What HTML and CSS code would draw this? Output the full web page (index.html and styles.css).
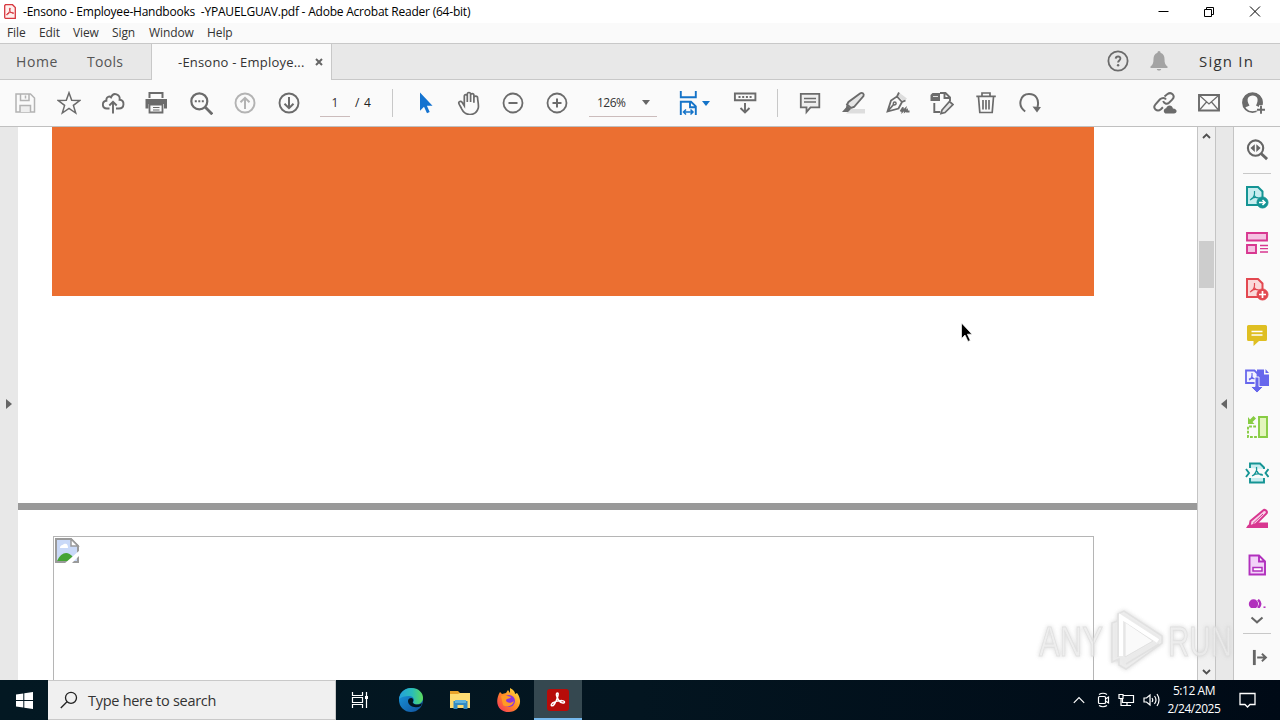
FILE: index.html
```
<!DOCTYPE html>
<html lang="en">
<head>
  <meta charset="UTF-8" />
  <meta name="viewport" content="width=device-width, initial-scale=1" />
  <title>-Ensono - Employee-Handbooks  -YPAUELGUAV.pdf - Adobe Acrobat Reader (64-bit)</title>
  <link rel="stylesheet" href="styles.css">
</head>
<body>
  <header class="titlebar">
    <svg class="app-icon" width="12" height="15" viewBox="0 0 12 15"><path d="M1.5.7h7l2.8 2.8v10.8H1.5a1 1 0 0 1-.8-.8v-12z" fill="#fff0ee" stroke="#d7373f" stroke-width="1.3"/><path d="M6 4c-1 0-.6 2 .3 3.4C7.500 9.300 9.500 10 9.700 9.100 9.800 8 5 8.200 3 9.900c-1 1 0 1.700 1 .3C5 8.600 7 4 6 4z" fill="none" stroke="#d7373f"/></svg>
    <h1>-Ensono - Employee-Handbooks&nbsp; -YPAUELGUAV.pdf - Adobe Acrobat Reader (64-bit)</h1>
    <div class="window-buttons">
      <svg width="12" height="12" viewBox="0 0 12 12"><path d="M1.500 5.500h10"/></svg>
      <svg width="12" height="12" viewBox="0 0 12 12"><path d="M1.500 3.500h7v7h-7zM3.500 3.500v-2h7v7h-2"/></svg>
      <svg width="12" height="12" viewBox="0 0 12 12"><path d="M1 .5l10 10M11 .5l-10 10"/></svg>
    </div>
  </header>

  <nav class="menubar">
    <span class="m-file">File</span>
    <span class="m-edit">Edit</span>
    <span class="m-view">View</span>
    <span class="m-sign">Sign</span>
    <span class="m-window">Window</span>
    <span class="m-help">Help</span>
  </nav>

  <div class="tabs">
    <span class="tab home">Home</span>
    <span class="tab tools">Tools</span>
    <div class="tab active">
      <span>-Ensono - Employe...</span>
      <svg width="8" height="8" viewBox="0 0 8 8"><path d="M1 1l6 6M7 1L1 7" stroke="#666" stroke-width="2"/></svg>
    </div>
    <div class="account">
      <svg width="24" height="24" viewBox="0 0 24 24"><circle cx="12" cy="12" r="9.600" fill="none" stroke="#6b6b6b" stroke-width="1.800"/><path d="M9.700 9.600c.2-2.800 4.800-2.700 4.700 0 0 1.900-2.300 1.900-2.300 4" fill="none" stroke="#6b6b6b" stroke-width="1.900"/><circle cx="12.100" cy="16.300" r="1.200" fill="#6b6b6b"/></svg>
      <svg class="bell" width="18" height="22" viewBox="0 0 18 22"><path d="M9 1c1 0 1.500.8 1.500 1.700 3 .9 4 3.500 4 6.300 0 4 .8 6 3 7.500V18H.5v-1.500C2.700 15 3.500 13 3.500 9c0-2.800 1-5.400 4-6.300C7.500 1.800 8 1 9 1zM6.800 19h4.400c-.3 2-4.100 2-4.400 0z" fill="#a3a3a3"/></svg>
      <span class="sign-in">Sign In</span>
    </div>
  </div>

  <div class="toolbar">
    <div class="group files">
      <svg class="icon off" viewBox="0 0 24 24"><path d="M3 3h14.500L21.500 7v14H3zM7.500 3v6.500h8.500V3M12.500 4.500v3"/><path d="M7 21v-6.500h10.500V21" fill="#eee"/></svg>
      <svg class="icon" viewBox="0 0 24 24"><path d="M12 1.800l2.700 7.500 8 .2-6.300 4.900 2.300 7.600L12 17.500 5.300 22l2.300-7.600L1.300 9.500l8-.2z" stroke-width="1.500"/></svg>
      <svg class="icon" viewBox="0 0 24 24"><path d="M8.500 17.500H5.800c-5-.2-5.300-7-.4-7.700C4.800 6 8.500 4.700 10 6.300c2.500-5.800 9.500-2.800 8.600 2.500 5.500.6 5 8.700-.6 8.700h-3M12 22.500V10.800M8.300 14.500L12 10.800l3.700 3.700" stroke-width="1.900"/></svg>
      <svg class="icon" viewBox="0 0 24 24"><path d="M4.500 7V2h13v5" stroke-width="2"/><path class="solid" d="M.5 8h21.500v9.500H19V13H3.500v4.500h-3z"/><path d="M4.500 13.500h13v8h-13z" fill="#fafafa" stroke-width="1.800"/><path d="M8 16.500h6.500M8 19h6.500" stroke-width="1.200"/></svg>
      <svg class="icon" viewBox="0 0 24 24"><circle cx="10.300" cy="10.300" r="8" stroke-width="2.200"/><path d="M16.300 16.300l7 7" stroke-width="2.800"/><path class="solid" d="M5.800 9.300h2v2h-2zM9.300 9.300h2v2h-2zM12.800 9.300h2v2h-2z"/></svg>
      <svg class="icon off" viewBox="0 0 24 24"><circle cx="12" cy="12" r="9.500" stroke-width="1.900"/><path d="M12 18V7M7.500 11.300L12 6.800l4.500 4.500" stroke-width="2"/></svg>
      <svg class="icon" viewBox="0 0 24 24"><circle cx="12" cy="12" r="9.500" stroke-width="1.900"/><path d="M12 6v11M7.500 12.700L12 17.200l4.500-4.500" stroke-width="2"/></svg>
    </div>
    <span class="page-number">1</span>
    <span class="page-total">/&nbsp;4</span>
    <i class="divider"></i>
    <div class="group view">
      <svg class="icon" viewBox="0 0 24 24"><path d="M7 1.500v18.300l4-4 3 6.500 2.700-1.300-2.800-6.300H19.500z" fill="#1473d0" stroke="none"/></svg>
      <svg class="icon" viewBox="0 0 24 24"><path d="M7.300 14.800V5.300c0-2.300 3-2.300 3 0V11 3.200c0-2.300 3.300-2.300 3.300 0V11 4.300c0-2.200 3.300-2.200 3.300 0v7.500-5c0-2.200 3.700-2.200 3.700 0 0 3 1.500 7.600.6 10.500-1.500 5-4 6.200-8.200 6.200-4.500 0-6.500-2-8.200-5.400-.9-2-2.400-4.100-2.900-5.700-.7-2 2-2.800 3.200-1.100z" stroke-width="1.700"/></svg>
      <svg class="icon" viewBox="0 0 24 24"><circle cx="12" cy="12" r="9.500" stroke-width="1.800"/><path d="M7.500 12h9" stroke-width="2"/></svg>
      <svg class="icon" viewBox="0 0 24 24"><circle cx="12" cy="12" r="9.500" stroke-width="1.800"/><path d="M7.500 12h9M12 7.500v9" stroke-width="2"/></svg>
    </div>
    <div class="zoom-box"><span>126%</span><i class="caret"></i></div>
    <div class="fit">
      <svg class="icon blue" viewBox="0 0 24 24"><path d="M4.800 0v6.300h15V0M4.800 24V10.800H15l4.800 4.500V24M14 10.800v5.500h5.500" stroke-width="1.900"/><path d="M7.500 21h9.500M10 18.500L7.500 21l2.500 2.500M14.500 18.500L17 21l-2.500 2.500" stroke-width="1.500"/></svg>
      <i class="caret blue"></i>
    </div>
    <svg class="icon keys" viewBox="0 0 24 24"><path d="M1.900 2.500h20.500v6.800H1.900zM12 12v9.500M7.500 17l4.500 4.500 4.500-4.500" stroke-width="1.900"/><path d="M5.500 6h14" stroke-width="2" stroke-dasharray="2 1.700"/></svg>
    <i class="divider"></i>
    <div class="group edit">
      <svg class="icon" viewBox="0 0 24 24"><path d="M2.800 2.800h18.500v13.500H12.500L8.500 21v-4.700H2.800z" fill="#eee" stroke-width="1.800"/><path d="M6 7.500h12M6 11h12" stroke-width="1.500"/></svg>
      <svg class="icon" viewBox="0 0 24 24"><path d="M9 18h14v4.500H4z" fill="#ddd" stroke="none"/><path d="M18 2.500c2-1.500 4.500 0 3.500 2.500L12 16l-3 1-4-3.500L6.500 11z" fill="#e5e5e5" stroke-width="1.900"/><path class="solid" d="M4.500 14l4.500 4-3 3H0l4-4.500z"/></svg>
      <svg class="icon" viewBox="0 0 24 24"><path d="M13 1.500l8 6-3 3-7-6z" fill="#ddd" stroke="none"/><path d="M13 1.500L11 5.500 5 9.500 1.500 20.500l11-3L16 11l3.500-1.500M11 5.500l5 5.500M1.500 20.500L8 13M14.500 20.500l2.500-4-.5 4 3-3-.5 3 2-1.500v1.500h2.500" stroke-width="1.800"/><circle cx="8.700" cy="12.500" r="1.400"/></svg>
      <svg class="icon" viewBox="0 0 24 24"><path d="M10 2h5.500l4.500 4.500V10M14.500 2v5H20M4.300 12v9h6" stroke-width="1.900"/><path class="solid" d="M2.500 2H10v8H.5V4z"/><path d="M3 5.500h5" stroke="#ddd" stroke-width="1"/><path d="M12 19l7.500-8.500 3.500 3-8 8-4 1z" fill="#e5e5e5" stroke-width="1.700"/></svg>
      <svg class="icon" viewBox="0 0 24 24"><path d="M2.300 5.300h19.500M8 5V2h8v3M4.500 6l1.300 15.500h12.400L19.500 6M9 9v9.500M12 9v9.500M15 9v9.500" stroke-width="1.700"/></svg>
      <svg class="icon" viewBox="0 0 24 24"><path d="M7.200 20.500C-1.300 14.500 2.500 3 11 3c7 0 10.500 5.500 8.500 13" stroke-width="2"/><path class="solid" d="M14.500 15.500l8.500.5-4 5.500z"/></svg>
    </div>
    <div class="group share">
      <svg class="icon" viewBox="0 0 24 24"><path d="M11.500 5.500l2.700-2.200c4.500-3.300 8.500 2 5 5.300L16 11.800c-2.400 2-5 .6-5.800-1.800M13 8.500c-1.300-2.200-4-2-6-.2l-4.500 5c-3.300 3.700 1.500 8.300 5.400 5l2-2" stroke-width="2"/><path class="solid" d="M13.500 22.500c-3.500 0-3.600-4.900-.3-5.200 1-4 6.300-3.400 6.700.1 5 .1 4.500 5.100 1 5.100z"/></svg>
      <svg class="icon" viewBox="0 0 24 24"><path d="M2 4h20v15.500H2z" stroke-width="1.900"/><path d="M2.500 4.500L12 13l9.500-8.500M2.500 19l7-8M21.500 19l-7-8" stroke-width="1.200"/></svg>
      <svg class="icon" viewBox="0 0 24 24"><circle cx="11.500" cy="11.700" r="9.500" stroke-width="1.800"/><path class="solid" d="M11.700 2C2 2 0 12 3.500 17c1.200-1.200 3-1.500 5-2.500C4.500 8 7.500 4.500 11.700 4.500S18.500 8 15 14.500l3 1.500 3.400-2C22.500 6 17 2 11.700 2z"/><path d="M20 14.200v9M15.500 18.700h9" stroke="#fafafa" stroke-width="4"/><path d="M20 14.700v8M16 18.700h8" stroke-width="1.900"/></svg>
    </div>
  </div>

  <main>
    <aside class="gutter"><i class="arrow right"></i></aside>
    <section class="document">
      <div class="page first"><div class="banner"></div></div>
      <div class="page second">
        <div class="missing">
          <svg width="25" height="26" viewBox="0 0 25 26"><path d="M1 1h15l7 7v16H1z" fill="#c9d9f8" stroke="#9a9a9a" stroke-width="2"/><path d="M5 10c0-3 3-3 4-4 3-1 4 1 4 4z" fill="#fff"/><path d="M2 23c4-8 10-11 16-4l-3 4z" fill="#45a435"/><path d="M9 26L25 12v5l-9 9z" fill="#fff"/><path d="M16 1v7h7z" fill="#fff" stroke="#9a9a9a" stroke-width="1.500"/></svg>
        </div>
      </div>
    </section>
    <div class="scrollbar">
      <svg width="9" height="6" viewBox="0 0 9 6"><path d="M1 5l3.500-3.500L8 5"/></svg>
      <i class="thumb"></i>
      <svg width="9" height="6" viewBox="0 0 9 6"><path d="M1 1l3.500 3.500L8 1"/></svg>
    </div>
    <aside class="gutter narrow"><i class="arrow left"></i></aside>
    <aside class="tools-pane">
      <svg class="tool find" viewBox="0 0 24 24"><circle cx="10.500" cy="10.500" r="8" stroke-width="2.200"/><path d="M16.500 16.500l6 5.500" stroke-width="3"/><path class="solid" stroke="none" d="M9.700 6.500v8l-4.500-4zM11.300 6.500v8l4.500-4z"/></svg>
      <svg class="tool teal" viewBox="0 0 24 24"><path d="M2 2h11l4.500 4.500V20H2z" fill="#c8edef" stroke-width="2"/><path d="M9.500 6c.5 5-2 8-4.500 9M9 10c1.500 3 3 3 6 3M6 14c2-2 5-2 8-1" stroke-width="1.200"/><circle class="solid" cx="17.500" cy="17.500" r="5.500"/><path d="M14 17.500h6M17.500 15l2.500 2.500-2.500 2.500" stroke="#fff" stroke-width="1.600"/></svg>
      <svg class="tool pink" viewBox="0 0 24 24"><path d="M2 2h20v7.500H2zM2 14h9v8H2z" fill="#f5c2e2" stroke-width="1.900"/><path d="M15 14.500h8M15 17.700h8M15 21h8" stroke-width="1.300"/></svg>
      <svg class="tool red" viewBox="0 0 24 24"><path d="M2 2h11l4.500 4.500V20H2z" fill="#fadada" stroke-width="2"/><path d="M9.500 6c.5 5-2 8-4.500 9M9 10c1.500 3 3 3 6 3M6 14c2-2 5-2 8-1" stroke-width="1.200"/><circle class="solid" cx="17.500" cy="17.500" r="5.500"/><path d="M14 17.500h7M17.500 14v7" stroke="#fff" stroke-width="1.700"/></svg>
      <svg class="tool yellow" viewBox="0 0 24 24"><path class="solid" stroke="none" d="M3.500 2h17q1.500 0 1.500 1.500v13q0 1.500-1.500 1.500H14l-5.500 5v-5h-5Q2 18 2 16.500v-13Q2 2 3.500 2z"/><path d="M6.500 8.500h11M6.500 12h11" stroke="#fff" stroke-width="1.700"/></svg>
      <svg class="tool violet" viewBox="0 0 24 24"><path class="solid" stroke="none" d="M12 .5h7V5.500h5V17H12zM20.500 0L24 4h-3.500z"/><path d="M1 1.500h8.500l3 3V14H1z" fill="#f2f2ff" stroke-width="1.800"/><path d="M7 4c.5 4-1 6-3 7M7 8c1 2 2 2 4 2M4 10c2-1 4-1 7 0" stroke-width="1.200"/><path d="M10 8v9.500H5.500L12 24l6.500-6.500H14V8z" class="solid" stroke="#fafafa" stroke-width=".9"/></svg>
      <svg class="tool lime" viewBox="0 0 24 24"><path d="M14 2h8v20h-8z" fill="#e3f5bd" stroke-width="1.900"/><path d="M11 11.500H3V22h9" stroke-width="1.900" stroke-dasharray="2.800 1.300"/><path class="solid" stroke="none" d="M3 2l2 2.500L8.500 1l2.500 2.500L7.500 7l2 2H3z"/></svg>
      <svg class="tool teal" viewBox="0 0 24 24"><path d="M5 7V2.500h10l4 4V8M5 17v4.500h14V17" fill="#c8edef" stroke-width="1.900"/><path d="M1 8l3 4-3 4M23.500 8l-3 4 3 4" stroke-width="1.900"/><path d="M11.500 6c1 4-2 8-4.500 9M12 10c1 3 3 4 6 4M8 14.500c2-1.500 5-2 9-1" stroke-width="1.300"/></svg>
      <svg class="tool pink" viewBox="0 0 24 24"><path class="solid" stroke="none" d="M10 15.500h13V21H1l2-3z"/><path d="M17.500 4c2-2.500 5.500 0 4 2.500L11 17l-6.500 2.500 1-5.500z" fill="#f8d4e9" stroke-width="2"/><path d="M18 7L8 16.500" stroke-width="1"/></svg>
      <svg class="tool purple" viewBox="0 0 24 24"><path d="M4.500 2.500H14l6 6V21.500H4.500zM14 2.500v6h6" fill="#f2d2f8" stroke-width="1.900"/><path d="M8 14.500h9v3.500H8z" fill="#fff" stroke-width="1.500"/></svg>
      <svg class="tool more purple" viewBox="0 0 24 9"><circle class="solid" stroke="none" cx="8.500" cy="5" r="4.700"/><path d="M13 .8q4.500 4 0 8.200" stroke-width="2.500"/><path d="M18.500 8.200h2" stroke-width="1.500"/></svg>
      <svg class="chevron" viewBox="0 0 14 8"><path d="M1.500 1.500L7 6.300l5.500-4.800"/></svg>
      <svg class="collapse" viewBox="0 0 18 18"><path d="M3 1v16" stroke-width="3"/><path d="M6 9h9M11 5l4.300 4L11 13" stroke-width="2"/></svg>
    </aside>

    <svg class="pointer" width="13" height="21" viewBox="0 0 13 21"><path d="M.5 1v15.500l3.500-3.400 3 6.300 2.300-1-2.900-6.200H11z" fill="#000" stroke="#fff" stroke-width=".7"/></svg>
    <svg class="watermark" width="204" height="70" viewBox="0 0 204 70">
      <g fill="#ececec" fill-opacity=".8" stroke="#dcdcdc">
        <text x="5" y="49" textLength="64" lengthAdjust="spacingAndGlyphs">ANY</text>
        <text x="134" y="49" textLength="64" lengthAdjust="spacingAndGlyphs">RUN</text>
        <path d="M78 55V16l6-2V7l6-3 38 25v7L92 62l-7-4v-6zM84 14v36M92 57l33-20" stroke-width="1.500"/>
        <path d="M91 15v35l28-16z" fill="#fff"/>
      </g>
      <path d="M87 49V10l37 24" fill="none" stroke="#fff" stroke-width="4"/>
    </svg>
  </main>

  <footer class="taskbar">
    <div class="start"><svg width="17" height="17" viewBox="0 0 17 17"><path d="M0 2.500L7.300 1.400V8H0zM8.300 1.300L17 0v8H8.300zM0 9h7.300v6.500L0 14.500zM8.300 9H17v8l-8.700-1.300z" fill="#fff"/></svg></div>
    <div class="search">
      <svg width="18" height="18" viewBox="0 0 18 18"><circle cx="11" cy="6.800" r="5.500"/><path d="M7 10.800L.8 17"/></svg>
      <span>Type here to search</span>
    </div>
    <div class="task-view"><svg width="18" height="18" viewBox="0 0 18 18"><path d="M1.500 1v3.500h10V1M1.500 17v-3.500h10V17M1.500 6.500h10v5h-10zM15.500 1v16" fill="none" stroke="#fff" stroke-width="1.200"/><path d="M14 5h3v3h-3z" fill="#fff"/></svg></div>
    <div class="tasks">
      <div class="task"><svg width="26" height="26" viewBox="0 0 26 26">
        <defs>
          <linearGradient id="edgeTop" x2="1"><stop stop-color="#249fdc"/><stop offset=".55" stop-color="#2abdb8"/><stop offset="1" stop-color="#5cdb5b"/></linearGradient>
          <linearGradient id="edgeBase" x2="1" y2="1"><stop stop-color="#189be0"/><stop offset="1" stop-color="#114f9c"/></linearGradient>
        </defs>
        <circle cx="13" cy="13" r="12" fill="url(#edgeBase)"/><path d="M1 12C2 5 7 1 13 1c8 0 12 5 12 10 0 6-7 8-10 5 2-3 1-7-4-7-4 0-8 1-10 3z" fill="url(#edgeTop)"/><path d="M15 16c-1-1 1-2 0-4-1-2-5-1-5 2 0 5 7 8 13 5l1-3c-3 2-7 2-9 0z" fill="#031520"/></svg></div>
      <div class="task"><svg width="24" height="24" viewBox="0 0 24 24"><path d="M2 3h8l2 2h10v4H2z" fill="#e9a32b"/><path d="M2 6h8l2-1h10v15H2z" fill="#ffdc72"/><path d="M5.500 21v-8h14v8h-4v-4h-6v4z" fill="#348cc4"/><path d="M7 12h11v3H7z" fill="#62b4dd"/></svg></div>
      <div class="task"><svg width="26" height="26" viewBox="0 0 26 26">
        <defs><linearGradient id="fox" x1="1" x2="0" y2="1"><stop stop-color="#ffef43"/><stop offset=".5" stop-color="#ff8b24"/><stop offset="1" stop-color="#f52962"/></linearGradient></defs>
        <path d="M4 5l2 2 4-1 2-3 2 3V1c4 2 5 4 5 6l2-1c7 9 1 19-8 19C2 25-2 15 4 5z" fill="url(#fox)"/><circle cx="13" cy="14" r="6" fill="#8a35dc"/><path d="M5 9c4-2 6 0 10 1-1 2-4 1-5 3 0 3 5 4 8 1-1 5-7 7-11 4z" fill="#ff9a25"/></svg></div>
      <div class="task current"><svg width="22" height="22" viewBox="0 0 22 22"><rect width="22" height="22" rx="3" fill="#b70c09"/><path d="M10.500 4c-2 0-1 4 1 7 2 3 6 4 6 2s-7-2-12 1c-3 3 0 4 2 1 2-3 5-11 3-11z" fill="none" stroke="#fff" stroke-width="1.500"/></svg></div>
    </div>
    <div class="tray">
      <svg class="up" width="12" height="8" viewBox="0 0 12 8"><path d="M.8 6.800L6 1.600l5.200 5.200"/></svg>
      <svg width="13" height="16" viewBox="0 0 13 16"><rect x="1.500" y="4.500" width="7" height="7" rx="1"/><path d="M8.500 7l3-2v6l-3-2M2 2.500Q6 0 10 2.500M2 13.500Q6 16 10 13.500"/></svg>
      <svg width="17" height="14" viewBox="0 0 17 14"><path d="M5.500 2.500h10v7h-11V6M1 1.500h4v4H1zM3 5.500v7h10M9 9.500v3"/></svg>
      <svg width="17" height="14" viewBox="0 0 17 14"><path d="M1 5h2.500L7 2v10L3.500 9H1zM9 5q1.500 2 0 4M11.500 3q3 4 0 8M14 1q4 6 0 12"/></svg>
    </div>
    <div class="clock"><span>5:12 AM</span><span>2/24/2025</span></div>
    <svg class="notify" width="17" height="17" viewBox="0 0 17 17"><path d="M1 1.500h15v11h-5L8.500 15 6 12.500H1z"/></svg>
  </footer>
</body>
</html>
```
FILE: styles.css
```
* {
  box-sizing: border-box;
}

body {
  margin: 0;
  width: 1280px;
  height: 720px;
  overflow: hidden;
  display: flex;
  flex-direction: column;
  font-family: 'Open Sans', 'Noto Sans', sans-serif;
  color: #333;
  background-color: #fff;
}

svg {
  display: block;
  flex: none;
  fill: none;
}

.titlebar {
  display: flex;
  align-items: center;
  height: 23px;
  padding: 1px 19px 1px 4px;
}

.titlebar h1 {
  margin: 0 0 0 7px;
  color: #000;
  font-size: 12px;
  font-weight: normal;
  letter-spacing: -0.22px;
  white-space: nowrap;
}

.window-buttons {
  display: flex;
  gap: 34px;
  margin-left: auto;
  stroke: #000;
}

.menubar {
  display: flex;
  align-items: center;
  height: 21px;
  padding: 0 0 2px 7px;
  background-color: #fafafa;
  border-bottom: 1px solid #c8c8c8;
  font-size: 12px;
  letter-spacing: -0.1px;
}

.m-file { width: 32px; }
.m-edit { width: 34px; }
.m-view { width: 39px; }
.m-sign { width: 37px; }
.m-window { width: 58px; }

.tabs {
  display: flex;
  height: 36px;
  background-color: #e8e8e8;
  border-bottom: 1px solid #c8c8c8;
  font-size: 14px;
}

.tab {
  display: flex;
  align-items: center;
  color: #555;
}

.home {
  width: 87px;
  padding-left: 16px;
  letter-spacing: 0.6px;
}

.tools {
  width: 64px;
  letter-spacing: 0.3px;
}

.active {
  width: 181px;
  height: 36px;
  padding: 0 8px 1px 26px;
  justify-content: space-between;
  border: 1px solid #c8c8c8;
  border-width: 0 1px;
  background-color: #fafafa;
  color: #333;
  font-size: 13px;
  letter-spacing: 0.2px;
}

.account {
  display: flex;
  align-items: center;
  margin-left: auto;
  padding: 0 26px 2px 0;
}

.bell {
  margin: 0 31px 0 20px;
}

.sign-in {
  width: 55px;
  font-size: 15px;
  letter-spacing: 1.2px;
  white-space: nowrap;
}

.toolbar {
  display: flex;
  align-items: center;
  height: 47px;
  padding: 0 15px 0 13px;
  background-color: #fafafa;
  border-bottom: 1px solid #c0c0c0;
}

.group {
  display: flex;
  gap: 20px;
}

.icon {
  width: 24px;
  height: 24px;
  stroke: #6b6b6b;
  stroke-width: 1.5;
}

.icon .solid {
  fill: #6b6b6b;
  stroke: none;
}

.icon.off {
  stroke: #b3b3b3;
}

.icon.blue {
  overflow: visible;
  stroke: #1473c8;
}

.page-number {
  width: 30px;
  height: 28px;
  margin: 0 5px 0 19px;
  padding-top: 5px;
  border-bottom: 1px solid #cbbcbc;
  text-align: center;
  font-size: 12px;
}

.page-total {
  width: 37px;
  padding-bottom: 1px;
  font-size: 12px;
  letter-spacing: 0.7px;
  color: #222;
}

.divider {
  width: 1px;
  height: 28px;
  background-color: #c8c8c8;
}

.view,
.edit {
  margin-left: 20px;
}

.zoom-box {
  display: flex;
  align-items: center;
  justify-content: space-between;
  width: 68px;
  height: 28px;
  margin: 0 19px 0 20px;
  padding: 0 7px 0 8px;
  border-bottom: 1px solid #cbbcbc;
  font-size: 12px;
  letter-spacing: -0.5px;
}

.caret {
  border: 4px solid transparent;
  border-top: 5px solid #666;
  border-bottom: 0;
}

.caret.blue {
  border-top-color: #1473c8;
}

.fit {
  display: flex;
  align-items: center;
  gap: 2px;
  width: 36px;
}

.keys {
  margin: 0 20px 0 21px;
}

.share {
  margin-left: auto;
}

main {
  position: relative;
  display: flex;
  height: 553px;
}

.gutter {
  display: flex;
  align-items: center;
  justify-content: center;
  width: 18px;
  background-color: #e8e8e8;
}

.narrow {
  padding-right: 1px;
  border-right: 1px solid #c4c4c4;
}

.arrow {
  border: 5px solid transparent;
}

.arrow.right {
  border-left: 6px solid #666;
  border-right: 0;
}

.arrow.left {
  border-right: 6px solid #666;
  border-left: 0;
}

.document {
  width: 1180px;
  border-right: 1px solid #c4c4c4;
  background-color: #fff;
}

.page {
  padding: 0 103px 0 34px;
}

.first {
  height: 383px;
  border-bottom: 7px solid #999;
}

.banner {
  height: 169px;
  background-color: #eb6f31;
}

.second {
  padding-top: 26px;
  padding-left: 35px;
}

.missing {
  height: 144px;
  padding: 1px;
  border: 1px solid #b5b5b5;
  border-bottom: 0;
}

.scrollbar {
  display: flex;
  flex-direction: column;
  align-items: center;
  width: 18px;
  padding: 6px 0 5px;
  background-color: #f0f0f0;
  border-right: 1px solid #c4c4c4;
  stroke: #505050;
  stroke-width: 1.8;
}

.thumb {
  width: 15px;
  height: 47px;
  margin: 102px 0 auto;
  background-color: #cdcdcd;
}

.tools-pane {
  display: flex;
  flex-direction: column;
  align-items: center;
  gap: 22px;
  width: 46px;
  padding-top: 11px;
  background-color: #fafafa;
}

.tool {
  width: 24px;
  height: 24px;
  color: #666;
  stroke: currentColor;
}

.tool .solid {
  fill: currentColor;
}

.find {
  width: 28px;
  height: 36px;
  margin-bottom: -11px;
  padding: 0 2px 12px;
  border-bottom: 1px solid #c8c8c8;
}

.teal { color: #149494; }
.pink { color: #d83790; }
.red { color: #e34850; }
.yellow { color: #dfbf22; }
.violet { color: #6767ec; }
.lime { color: #87cc43; }
.purple { color: #b130bd; }

.more {
  height: 9px;
}

.chevron {
  width: 14px;
  height: 8px;
  margin-top: -14px;
  stroke: #666;
  stroke-width: 2;
}

.collapse {
  width: 28px;
  height: 33px;
  margin-top: -13px;
  padding: 15px 2px 0 8px;
  border-top: 1px solid #c8c8c8;
  stroke: #666;
}

.pointer {
  position: absolute;
  left: 961px;
  top: 195px;
}

.watermark {
  position: absolute;
  left: 1034px;
  top: 480px;
  overflow: visible;
  opacity: 0.85;
  filter: drop-shadow(0 0 2px #ccc);
  font-family: 'Liberation Sans', sans-serif;
  font-size: 42px;
}

.taskbar {
  display: flex;
  height: 40px;
  background: linear-gradient(90deg, #031822, #031520 50%, #000a16);
  color: #fff;
}

.start,
.task,
.task-view {
  display: flex;
  align-items: center;
  justify-content: center;
  width: 48px;
}

.tasks {
  display: flex;
  gap: 1px;
  margin-left: 3px;
}

.search {
  display: flex;
  align-items: center;
  width: 288px;
  padding-left: 12px;
  gap: 10px;
  border: 1px solid #c9c9c9;
  border-left: 0;
  background-color: #f0f0f0;
  color: #333;
  stroke: #222;
  stroke-width: 1.3;
  font-size: 14.5px;
  letter-spacing: -0.28px;
}

.search span {
  stroke: none;
}

.current {
  padding-top: 2px;
  border-bottom: 2px solid #76b9ed;
  background-color: #354850;
}

.tray {
  display: flex;
  align-items: center;
  gap: 8px;
  margin-left: auto;
  stroke: #fff;
  stroke-width: 1.2;
}

.up {
  margin-right: 4px;
}

.clock {
  display: flex;
  flex-direction: column;
  align-items: center;
  width: 54px;
  margin: 2px 18px 0 7px;
  font-size: 12px;
  line-height: 18px;
  letter-spacing: -0.45px;
}

.notify {
  align-self: center;
  margin-right: 24px;
  stroke: #fff;
  stroke-width: 1.3;
}
```
